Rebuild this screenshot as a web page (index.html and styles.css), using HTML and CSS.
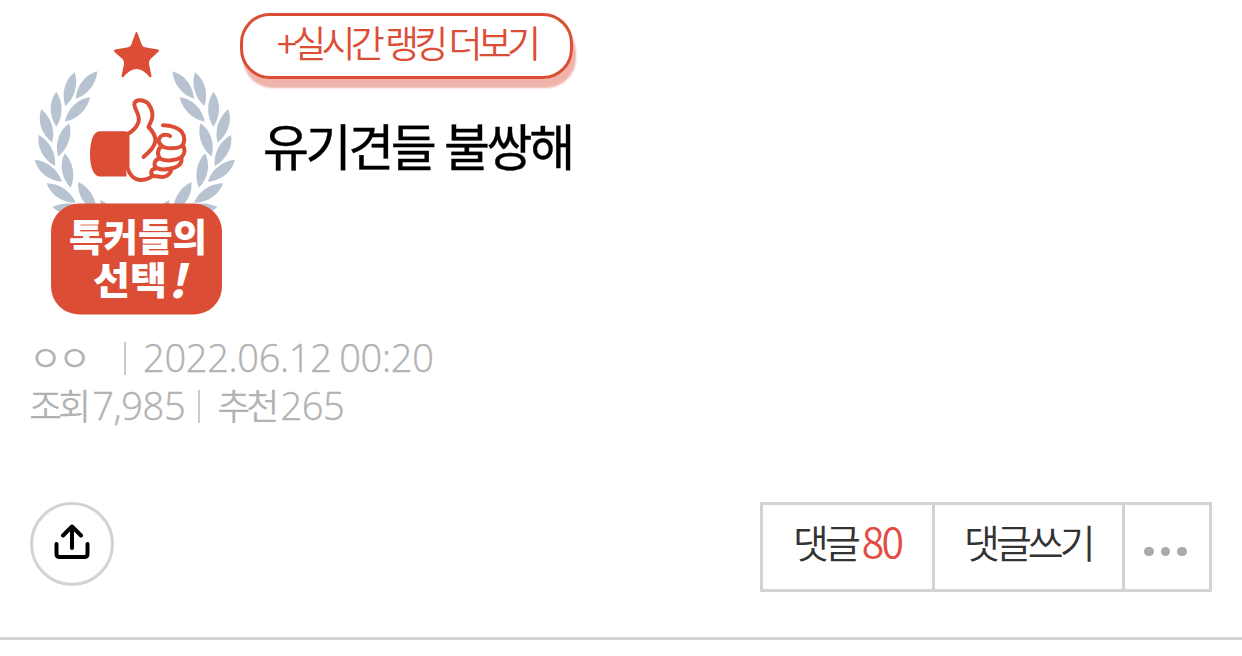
FILE: index.html
```html
<!DOCTYPE html>
<html lang="ko">

<head>
    <meta charset="UTF-8">
    <meta name="viewport" content="width=device-width, initial-scale=1.0">
    <title>유기견들 불쌍해</title>
    <link rel="stylesheet" href="styles.css">
</head>

<body>
    <div class="post">
        <div class="head">
            <svg class="badge" width="210" height="290" viewBox="30 30 210 290">
                <defs>
                    <path id="leaf" d="M0 0C-7 9 -8 23 0 35C7 25 7 10 0 0Z" />
                    <g id="branch">
                        <use href="#leaf" transform="translate(74.7 72.3) rotate(15.6)" />
                        <use href="#leaf" transform="translate(97.3 71.3) rotate(38.2)" />
                        <use href="#leaf" transform="translate(56.3 91.7)" />
                        <use href="#leaf" transform="translate(90 97.3) rotate(46)" />
                        <use href="#leaf" transform="translate(41.3 109.3) rotate(-17.9)" />
                        <use href="#leaf" transform="translate(69.3 123.3) rotate(18.7)" />
                        <use href="#leaf" transform="translate(38.7 135) rotate(-27.7)" />
                        <use href="#leaf" transform="translate(64.7 153.3) rotate(-9.7)" />
                        <use href="#leaf" transform="translate(34.7 159.7) rotate(-51)" />
                        <use href="#leaf" transform="translate(46.7 183.3) rotate(-56)" />
                        <use href="#leaf" transform="translate(78.3 182) rotate(-31)" />
                        <use href="#leaf" transform="translate(52.5 207) rotate(-84)" />
                        <use href="#leaf" transform="translate(100.5 200) rotate(-32)" />
                    </g>
                </defs>
                <g class="laurel">
                    <use href="#branch" />
                    <use href="#branch" transform="translate(269.7 0) scale(-1 1)" />
                </g>
                <path class="red" d="M135.5 33Q136.5 31 137.5 33L141.500 44Q142.500 47 146 47.500L158 49.500Q160 50.500 158 52L150.500 59Q148.500 61 149 64L151.500 76Q151.500 78 149.500 77Q143 69 136.500 69Q130 69 123.500 77Q121.500 78 121.500 76L124 64Q124.500 61 122.500 59L115 52.500Q113 50.500 115 49.500L127 47.500Q130.500 47 131.500 44Z" />
                <path class="red" d="M126.500 131.300H99C93 132 90 142 90 154C90 166 93 175.500 99 176.500H126.500Z" />
                <g class="hand">
                    <path d="M127.500 134C132 132 137 127 138.500 122C141 115 133 108 134.500 103C136.500 98.500 145 100 148.500 104C152 109 153.500 114 152 119L148.500 127C151.500 130 155 134 155.500 140C155 147 149 152 143.500 157" />
                    <path d="M127.500 134V168C130 176 134 179.500 140 180C146 180 150 178 152.500 176" />
                    <path d="M163 125.300C170 125.500 177 127 181.500 131.500C185 136 185.500 143 181 146.500C176 149 166 149 162 146C157 142.500 158 137 163 135C166 134.500 168 134.500 170 136" />
                    <path d="M161 146.500C157 150 157 156 161 159C167 162 176 160 181 157.500C185 154 185 149 183 145" />
                    <path d="M159 158.500C154 160 153 166 157 168C162 171 169 169 175 167.500C180 165.500 182 162 181.500 158" />
                    <path d="M156 168.500C150 169 150 175 154 176C158 176 161 178 165 176.500C169 175 171 172 171.500 169" />
                </g>
                <rect class="red" x="51" y="203.500" width="171" height="111" rx="28" />
                <text class="badge_text" x="69" y="251" textLength="138" lengthAdjust="spacingAndGlyphs">톡커들의</text>
                <text class="badge_text" x="93" y="294" textLength="74" lengthAdjust="spacingAndGlyphs">선택</text>
                <text class="badge_text mark" transform="translate(168 298) skewX(-13)">!</text>
            </svg>
            <div class="title_box">
                <a class="rank">+실시간 랭킹 더보기</a>
                <h1 class="title">유기견들 불쌍해</h1>
            </div>
        </div>

        <div class="info">
            <p><span class="writer">ㅇㅇ</span><i class="bar"></i><span class="date">2022.06.12 00:20</span></p>
            <p><span class="label">조회</span><span class="num">7,985</span><i class="bar bar2"></i><span class="label">추천</span><span class="num">265</span></p>
        </div>

        <div class="tools">
            <a class="share">
                <svg width="36" height="36" viewBox="0 0 36 36">
                    <path d="M2.500 20V30Q2.500 33 5.500 33H30.500Q33.500 33 33.500 30V20M18 24V3M9 11.500L18 2.500L27 11.500" />
                </svg>
            </a>
            <div class="btns">
                <a class="reply">댓글 <em>80</em></a>
                <a class="write">댓글쓰기</a>
                <a class="more"><i></i><i></i><i></i></a>
            </div>
        </div>
    </div>
</body>

</html>
```

FILE: styles.css
```css
* {
    margin: 0;
    padding: 0;
    box-sizing: border-box;
}

body {
    background-color: #fff;
    font-family: "Noto Sans CJK KR", sans-serif;
    font-weight: 350;
    overflow: hidden;
}

i,
em {
    font-style: normal;
}

.post {
    height: 640px;
    border-bottom: 3px solid #d3d3d3;
}

.head {
    display: flex;
    height: 334px;
    padding: 13px 0 0 30px;
}

.badge {
    margin-top: 17px;
}

.laurel {
    fill: #b7c3d1;
}

.red {
    fill: #db4e35;
}

.hand {
    fill: none;
    stroke: #db4e35;
    stroke-width: 4;
    stroke-linecap: round;
    stroke-linejoin: round;
}

.badge_text {
    fill: #fff;
    font-size: 38px;
    font-weight: 900;
}

.mark {
    font-size: 46px;
}

.rank {
    display: block;
    width: 333px;
    height: 66px;
    border: 3px solid #db4e35;
    border-radius: 30px;
    box-shadow: 3px 9px 2px #efb3aa;
    color: #db4e35;
    font-size: 37px;
    line-height: 52px;
    letter-spacing: -4.8px;
    word-spacing: -0.5px;
    text-align: center;
    white-space: nowrap;
}

.title {
    margin: 30px 0 0 23px;
    color: #000;
    font-size: 50px;
    font-weight: 400;
    line-height: 70px;
    letter-spacing: -3.4px;
    white-space: nowrap;
    -webkit-text-stroke: 0.4px #000;
}

.info {
    padding-left: 29px;
    color: #b2b2b2;
    font-size: 36px;
}

.info p {
    display: flex;
    align-items: center;
    height: 48px;
}

.info span {
    margin-top: -4px;
}

.writer {
    width: 95px;
    letter-spacing: -4px;
}

.info .date,
.info .num {
    margin-top: -2px;
    font-family: "Open Sans", "Noto Sans CJK KR", sans-serif;
    font-size: 38px;
    font-weight: 300;
    -webkit-text-stroke: 0.4px #b2b2b2;
}

.date {
    letter-spacing: -0.3px;
    word-spacing: -2px;
}

.num {
    margin-left: 5px;
    letter-spacing: -0.4px;
}

.bar {
    width: 2px;
    height: 33px;
    margin-right: 17px;
    background: #ccc;
}

.bar2 {
    margin-left: 13px;
}

.label {
    letter-spacing: -4px;
}

.tools {
    display: flex;
    justify-content: space-between;
    padding: 72px 30px 0;
}

.share {
    display: flex;
    align-items: center;
    justify-content: center;
    width: 84px;
    height: 84px;
    padding-bottom: 5px;
    border: 3px solid #d3d3d3;
    border-radius: 50%;
}

.share path {
    fill: none;
    stroke: #000;
    stroke-width: 4;
    stroke-linecap: round;
    stroke-linejoin: round;
}

.btns {
    display: flex;
    height: 90px;
    border: 3px solid #d3d3d3;
    color: #333;
    font-size: 39px;
    line-height: 72px;
    letter-spacing: -4px;
}

.btns a {
    padding-left: 30px;
    white-space: nowrap;
}

.btns a + a {
    border-left: 3px solid #d3d3d3;
}

.reply {
    width: 169px;
    word-spacing: -2px;
}

.reply em {
    color: #e24c44;
    font-size: 41px;
    font-weight: 350;
    letter-spacing: -2.8px;
    line-height: 1;
}

.btns .write {
    width: 190px;
    padding-left: 29px;
}

.btns .more {
    display: flex;
    align-items: center;
    gap: 7px;
    width: 87px;
    padding: 9px 0 0 19px;
}

.more i {
    width: 9.5px;
    height: 9.5px;
    border-radius: 50%;
    background: #aaa;
}
```
